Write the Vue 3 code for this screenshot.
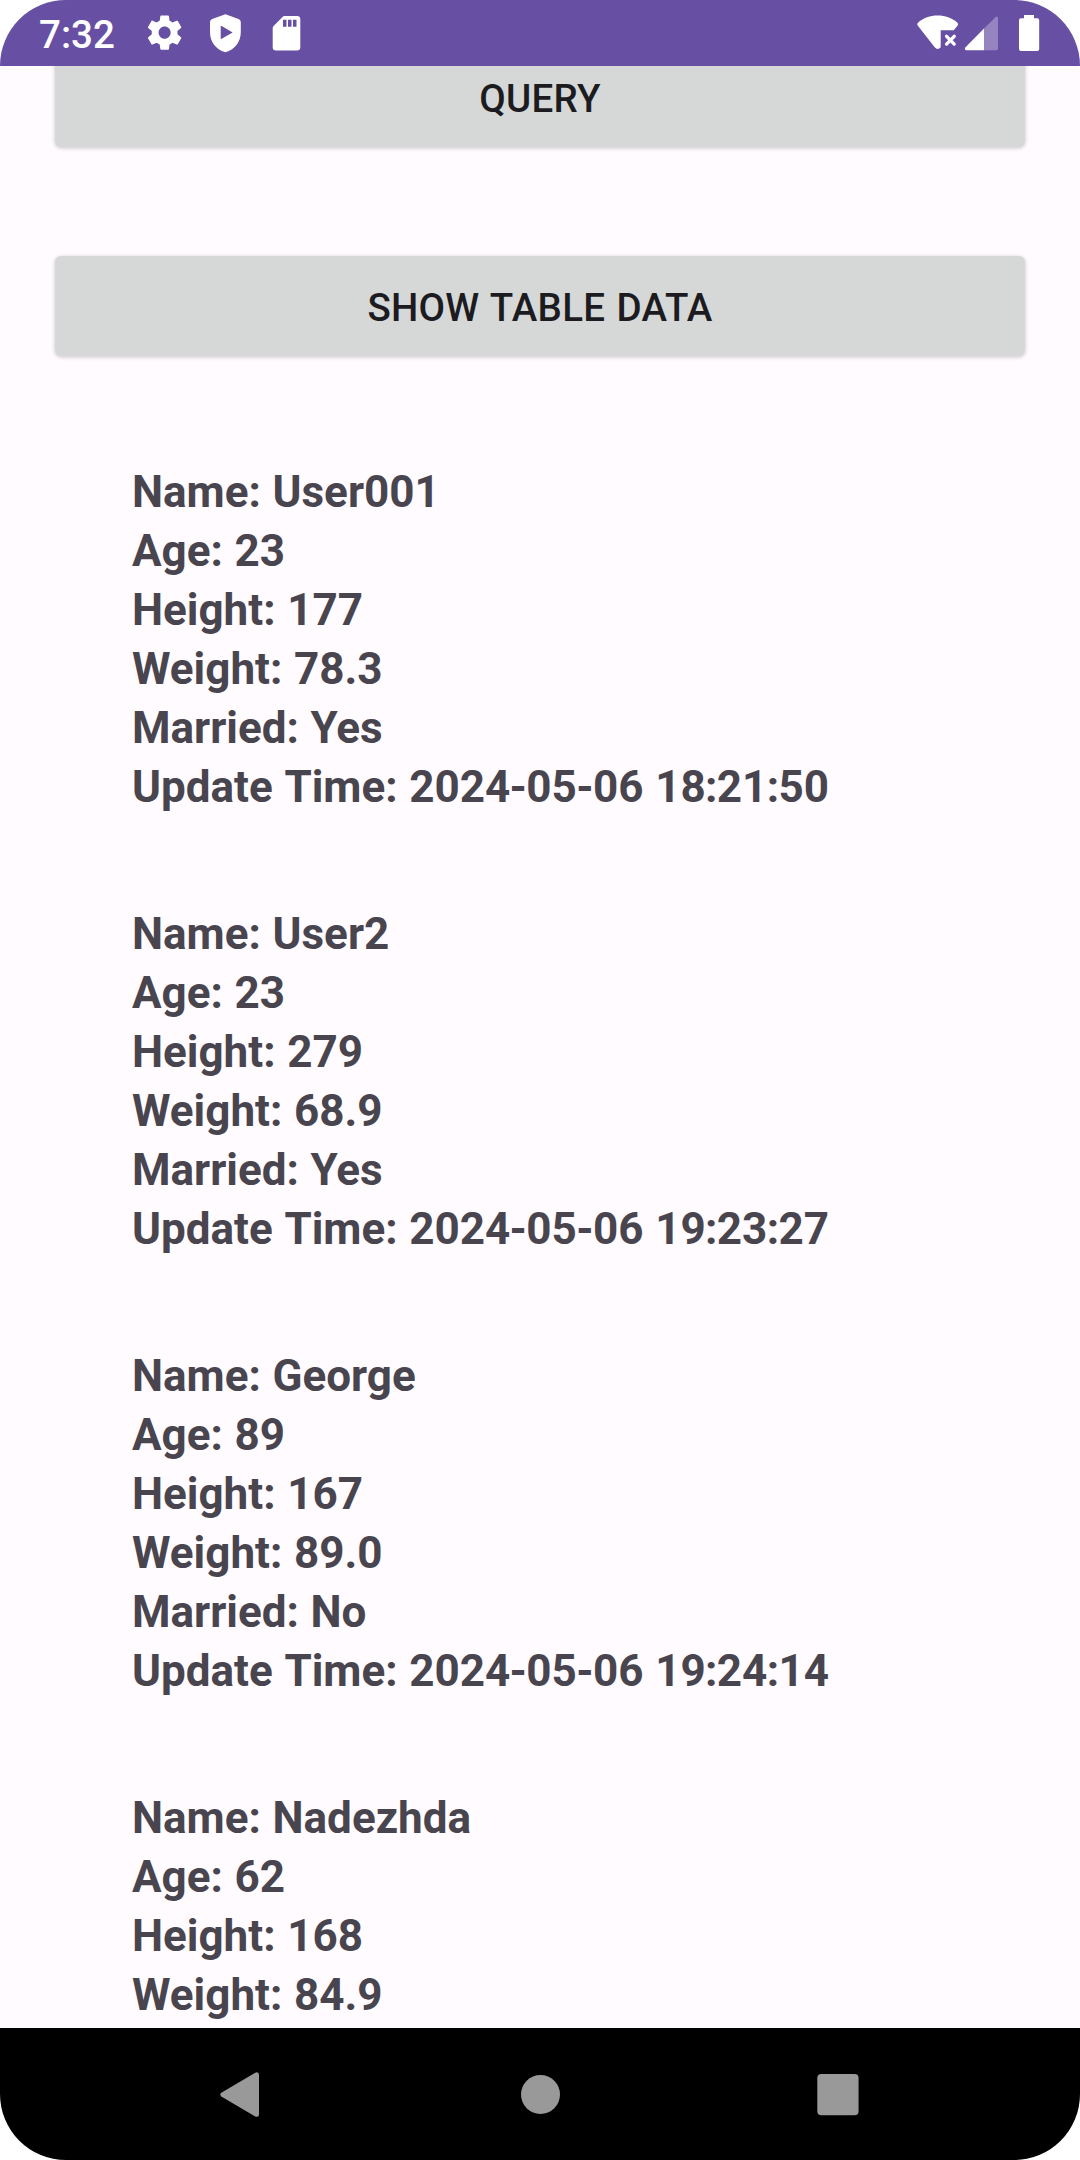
<script setup>
const buttons = ['Query', 'Show table data']

const records = [
  { name: 'User001', age: '23', height: '177', weight: '78.3', married: 'Yes', updated: '2024-05-06 18:21:50' },
  { name: 'User2', age: '23', height: '279', weight: '68.9', married: 'Yes', updated: '2024-05-06 19:23:27' },
  { name: 'George', age: '89', height: '167', weight: '89.0', married: 'No', updated: '2024-05-06 19:24:14' },
  { name: 'Nadezhda', age: '62', height: '168', weight: '84.9' },
]

const fields = [
  ['Name', 'name'],
  ['Age', 'age'],
  ['Height', 'height'],
  ['Weight', 'weight'],
  ['Married', 'married'],
  ['Update Time', 'updated'],
]

const linesOf = (record) =>
  fields
    .filter(([, key]) => record[key])
    .map(([label, key]) => ({ key, labelWords: `${label}:`.split(' '), valueWords: record[key].split(' ') }))

// Splits dates and times into digit groups and their separators.
const partsOf = (word) => word.split(/([-:])/)
const isSeparator = (part) => part === '-' || part === ':'
</script>

<template>
  <div class="screen">
    <header class="status">
      <span class="time">7:32</span>
      <svg class="gear" width="41.25" height="41.25" viewBox="0 0 24 24">
        <path d="M19.43 12.98c.04-.32.07-.64.07-.98s-.03-.66-.07-.98l2.11-1.65c.19-.15.24-.42.12-.64l-2-3.46c-.12-.22-.39-.3-.61-.22l-2.49 1c-.52-.4-1.08-.73-1.69-.98l-.38-2.65C14.46 2.18 14.25 2 14 2h-4c-.25 0-.46.18-.49.42l-.38 2.65c-.61.25-1.17.59-1.69.98l-2.49-1c-.23-.09-.49 0-.61.22l-2 3.46c-.13.22-.07.49.12.64l2.11 1.65c-.04.32-.07.65-.07.98s.03.66.07.98l-2.11 1.65c-.19.15-.24.42-.12.64l2 3.46c.12.22.39.3.61.22l2.49-1c.52.4 1.08.73 1.69.98l.38 2.65c.03.24.24.42.49.42h4c.25 0 .46-.18.49-.42l.38-2.65c.61-.25 1.17-.59 1.69-.98l2.49 1c.23.09.49 0 .61-.22l2-3.46c.12-.22.07-.49-.12-.64l-2.11-1.65zM12 15.5c-1.93 0-3.5-1.57-3.5-3.5s1.57-3.5 3.5-3.5 3.5 1.57 3.5 3.5-1.57 3.5-3.5 3.5z" />
      </svg>
      <svg class="shield" width="44" height="66" viewBox="204 0 44 66">
        <path fill-rule="evenodd" d="M225.4 14.2L238.6 19Q240.8 19.9 240.8 22V32C240.8 41.5 235.5 49.3 225.4 52.2C215.3 49.3 210 41.5 210 32V22Q210 19.9 212.2 19ZM221.7 26.1Q220.7 25.5 220.7 26.7V38.3Q220.7 39.5 221.7 38.8L232.6 32.5Z" />
      </svg>
      <svg class="card" width="44" height="66" viewBox="265 0 44 66">
        <path fill-rule="evenodd" d="M284.5 16H297Q300.3 16 300.3 19.3V47.3Q300.3 50.6 297 50.6H276Q272.7 50.6 272.7 47.3V28Q272.7 26.7 273.6 25.9L282.5 17Q283.4 16 284.5 16ZM283 19.7V26.8H286.5V19.7ZM288 19.7V26.8H291.5V19.7ZM293 19.7V26.8H296.5V19.7Z" />
      </svg>
      <span class="grow"></span>
      <svg width="50" height="66" viewBox="912 0 50 66">
        <path d="M917.7 25.6Q916.4 23.8 918.2 22.4C923.5 18.1 930 15.5 937.6 15.5S951.8 18.1 957.2 22.4Q959 23.8 957.7 25.6L953.7 30.3H940.7V47.2Q937.7 50.7 934.7 47.2Z" />
        <path d="M946.6 36.3L954.2 44.1M954.2 36.3L946.6 44.1" fill="none" stroke="#fff" stroke-width="3.3" stroke-linecap="round" />
      </svg>
      <svg width="40" height="66" viewBox="962 0 40 66">
        <path class="dim" d="M984 28.4L995.5 17.2Q998 15.5 998 18.3V48.5Q998 50.2 996.3 50.2H984Z" />
        <path d="M984 28.4V50.2H966.3Q963.9 49.8 965.5 47.3Z" />
      </svg>
      <svg class="battery" width="30" height="66" viewBox="1014 0 30 66">
        <path d="M1024 15H1034V18.3H1037.2Q1039.2 18.3 1039.2 20.3V49Q1039.2 51 1037.2 51H1021Q1019 51 1019 49V20.3Q1019 18.3 1021 18.3H1024Z" />
      </svg>
    </header>

    <main class="content">
      <div class="actions">
        <button v-for="label in buttons" :key="label" class="action">{{ label }}</button>
      </div>
      <section class="records">
        <div v-for="r in records" :key="r.name" class="record">
          <div v-for="line in linesOf(r)" :key="line.key">
            <template v-for="word in line.labelWords" :key="word"><span class="word">{{ word }}</span>{{ ' ' }}</template>
            <template v-for="word in line.valueWords" :key="word"><span class="word"><span v-for="(part, i) in partsOf(word)" :key="i" :class="{ separator: isSeparator(part) }">{{ part }}</span></span>{{ ' ' }}</template>
          </div>
        </div>
      </section>
    </main>

    <nav class="navbar">
      <svg width="60" height="60" viewBox="210 2064 60 60">
        <path d="M221.3 2092.7L254.8 2072.9Q259 2071.2 259 2075V2114.2Q259 2118 254.8 2116.3L221.3 2096.5Q219.3 2094.6 221.3 2092.7Z" />
      </svg>
      <svg width="60" height="60" viewBox="0 0 60 60"><circle cx="31.5" cy="30.5" r="19.5" /></svg>
      <svg width="60" height="60" viewBox="0 0 60 60"><rect x="9.3" y="10" width="41.25" height="41.25" rx="4" /></svg>
    </nav>
  </div>
</template>

<style>
body {
  margin: 0;
  background: #fff;
}
</style>

<style scoped>
.screen {
  width: 1080px;
  height: 2160px;
  display: flex;
  flex-direction: column;
  overflow: hidden;
  border-radius: 66px;
  background: #fffbff;
  font-family: Roboto, "Liberation Sans", sans-serif;
}
.status {
  flex: none;
  height: 66px;
  box-sizing: border-box;
  padding: 0 36px 0 39px;
  display: flex;
  align-items: center;
  background: #6750a4;
  color: #fff;
}
.status svg {
  flex: none;
  fill: #fff;
}
.time {
  width: 104.5px;
  font-size: 38.5px;
  line-height: 66px;
  font-weight: 500;
  padding-top: 4px;
}
.gear {
  margin-right: 19.2px;
}
.shield {
  margin-right: 17px;
}
.grow {
  flex: 1;
}
.dim {
  opacity: 0.3;
}
.battery {
  margin-left: 12px;
}
.content {
  flex: 1;
  min-height: 0;
  overflow: hidden;
}
.actions {
  display: flex;
  flex-direction: column;
  gap: 109px;
  margin-top: -19px;
  padding: 0 55px;
}
.action {
  height: 100px;
  padding: 2px 0 0;
  border: 0;
  border-radius: 6px;
  background: #d6d8d7;
  box-shadow: 0 1px 4px rgba(0, 0, 0, 0.22);
  color: #1c1b1f;
  font: 500 38.5px/45px Roboto, "Liberation Sans", sans-serif;
  letter-spacing: 0.25px;
  word-spacing: 1.5px;
  text-transform: uppercase;
}
.records {
  margin-top: 107px;
  padding-left: 132px;
  display: flex;
  flex-direction: column;
  gap: 88px;
  color: #49454f;
  font-size: 44px;
  line-height: 59px;
  font-weight: 700;
  word-spacing: 0.7px;
}
.word {
  display: inline-block;
}
.separator {
  margin: 0 -0.6px;
}
.navbar {
  flex: none;
  height: 132px;
  box-sizing: border-box;
  padding: 0 212px 0 210px;
  display: flex;
  align-items: center;
  justify-content: space-between;
  background: #000;
}
.navbar svg {
  fill: #999;
}
</style>
